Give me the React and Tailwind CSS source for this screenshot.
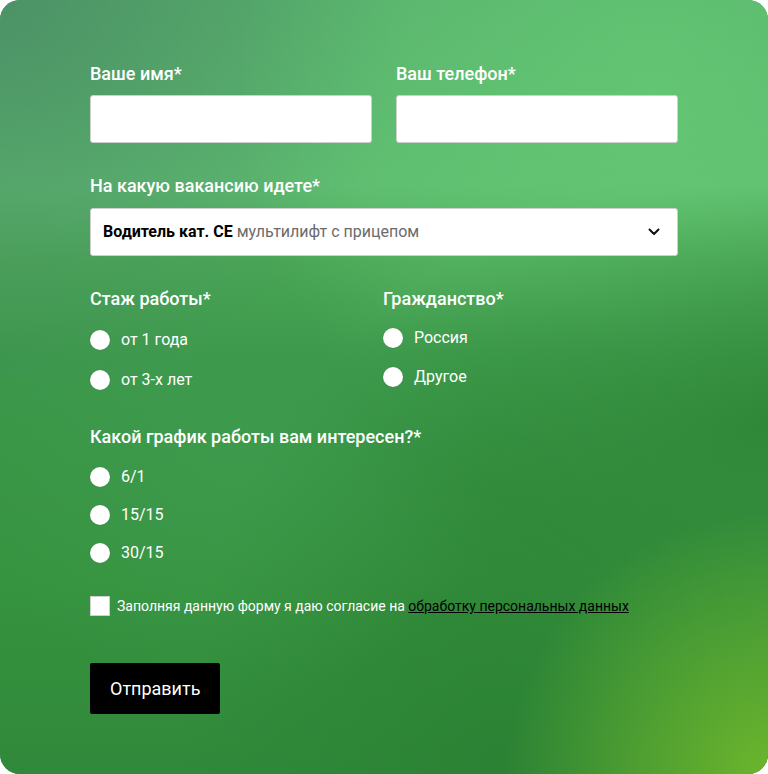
import React, { useState } from 'react';

const Radio = ({ name, label, checked, onChange }) => (
  <label className="flex items-center gap-[11px] h-5 cursor-pointer">
    <input type="radio" name={name} checked={checked} onChange={onChange} className="sr-only" />
    <span className="w-5 h-5 rounded-full bg-white flex items-center justify-center shadow-[0_0_1px_rgba(0,0,0,0.3)]">
      {checked && <span className="w-2 h-2 rounded-full bg-black" />}
    </span>
    <span className="text-[16px] leading-5 text-white">{label}</span>
  </label>
);

const Label = ({ children }) => (
  <span className="text-[18px] font-medium text-white leading-5">{children}</span>
);

const App = () => {
  const [exp, setExp] = useState('');
  const [cit, setCit] = useState('');
  const [sched, setSched] = useState('');
  const [agree, setAgree] = useState(false);

  return (
    <div className="w-[768px] h-[774px] bg-white font-['Roboto',sans-serif]">
      <div className="relative w-full h-full rounded-[20px] overflow-hidden bg-[#3a9549]">
        {/* background layers */}
        <div className="absolute inset-0 bg-[linear-gradient(180deg,#58b16c_0%,#5ebc70_24%,#4aa655_34%,#3c984b_46%,#36933f_75%,#30893a_100%)]" />
        <div className="absolute inset-0 bg-[radial-gradient(circle_at_0%_0%,rgba(72,135,100,0.75)_0%,rgba(72,135,100,0)_38%)]" />
        <div className="absolute inset-0 bg-[radial-gradient(ellipse_at_85%_12%,rgba(102,204,118,0.7)_0%,rgba(102,204,118,0)_45%)]" />
        <div className="absolute inset-0 bg-[radial-gradient(ellipse_at_100%_55%,rgba(44,132,52,0.85)_0%,rgba(44,132,52,0)_40%)]" />
        <div className="absolute inset-0 bg-[radial-gradient(ellipse_at_65%_100%,rgba(42,128,50,0.8)_0%,rgba(42,128,50,0)_45%)]" />
        <div className="absolute inset-0 bg-[radial-gradient(ellipse_at_30%_60%,rgba(66,160,84,0.45)_0%,rgba(66,160,84,0)_35%)]" />
        <div className="absolute inset-0 bg-[radial-gradient(circle_at_100%_100%,#6cb52c_0%,rgba(108,181,44,0.6)_10%,rgba(108,181,44,0)_24%)]" />

        <form className="relative pt-16 pl-[90px] w-[678px] flex flex-col" onSubmit={(e) => e.preventDefault()}>
          <div className="grid grid-cols-2 gap-6">
            <div className="flex flex-col gap-[11px]">
              <Label>Ваше имя*</Label>
              <input className="h-12 bg-white rounded-[3px] border border-[#cfcfcf] px-3 outline-none" />
            </div>
            <div className="flex flex-col gap-[11px]">
              <Label>Ваш телефон*</Label>
              <input className="h-12 bg-white rounded-[3px] border border-[#cfcfcf] px-3 outline-none" />
            </div>
          </div>

          <div className="flex flex-col gap-3 mt-[33px]">
            <Label>На какую вакансию идете*</Label>
            <div className="h-12 bg-white rounded-[3px] border border-[#cfcfcf] flex items-center justify-between pl-3 pr-[17px]">
              <span className="text-[16px]">
                <span className="font-bold text-black">Водитель кат. CE</span>{' '}
                <span className="text-[#6b6b6b]">мультилифт с прицепом</span>
              </span>
              <svg width="12" height="8" viewBox="0 0 12 8" fill="none">
                <path d="M1.5 1.5L6 6L10.5 1.5" stroke="#111" strokeWidth="2" strokeLinecap="round" strokeLinejoin="round" />
              </svg>
            </div>
          </div>

          <div className="flex mt-[33px]">
            <div className="w-[293px] flex flex-col">
              <Label>Стаж работы*</Label>
              <div className="flex flex-col gap-5 mt-[21px]">
                <Radio name="exp" label="от 1 года" checked={exp === '1'} onChange={() => setExp('1')} />
                <Radio name="exp" label="от 3-х лет" checked={exp === '3'} onChange={() => setExp('3')} />
              </div>
            </div>
            <div className="flex flex-col">
              <Label>Гражданство*</Label>
              <div className="flex flex-col gap-[19px] mt-[19px]">
                <Radio name="cit" label="Россия" checked={cit === 'ru'} onChange={() => setCit('ru')} />
                <Radio name="cit" label="Другое" checked={cit === 'other'} onChange={() => setCit('other')} />
              </div>
            </div>
          </div>

          <div className="flex flex-col mt-[37px]">
            <Label>Какой график работы вам интересен?*</Label>
            <div className="flex flex-col gap-[18px] mt-5">
              <Radio name="sched" label="6/1" checked={sched === '6/1'} onChange={() => setSched('6/1')} />
              <Radio name="sched" label="15/15" checked={sched === '15/15'} onChange={() => setSched('15/15')} />
              <Radio name="sched" label="30/15" checked={sched === '30/15'} onChange={() => setSched('30/15')} />
            </div>
          </div>

          <label className="flex items-center gap-[7px] h-5 mt-[33px] cursor-pointer">
            <input type="checkbox" checked={agree} onChange={() => setAgree(!agree)} className="sr-only" />
            <span className="w-5 h-5 bg-white border border-[#cfcfcf] flex items-center justify-center">
              {agree && <span className="text-[12px] leading-none">✓</span>}
            </span>
            <span className="text-[14px] leading-5 text-white">
              Заполняя данную форму я даю согласие на{' '}
              <a href="#" className="text-black underline">обработку персональных данных</a>
            </span>
          </label>

          <div className="mt-[47px]">
            <button type="submit" className="h-[51px] px-5 bg-black text-white rounded-[2px] text-[18px]">
              Отправить
            </button>
          </div>
        </form>
      </div>
    </div>
  );
};

export default App;
